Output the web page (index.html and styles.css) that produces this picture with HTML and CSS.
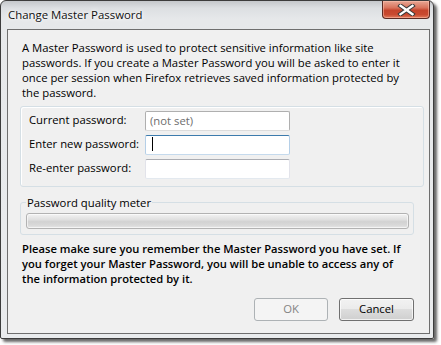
FILE: index.html
```html
<!DOCTYPE html>
<html>
<head>
<meta charset="utf-8">
<link rel="stylesheet" href="styles.css">
</head>
<body>
<div class="window">
  <div class="titlebar">
    <div class="title">Change Master Password</div>
    <div class="close">
      <svg width="21" height="12" viewBox="0 0 21 12">
        <path d="M4.5 1.8 L16.5 10.2 M16.5 1.8 L4.5 10.2" stroke="#3a3a3a" stroke-width="4.4" stroke-linecap="square" fill="none"/>
        <path d="M4.5 1.8 L16.5 10.2 M16.5 1.8 L4.5 10.2" stroke="#ffffff" stroke-width="2.4" stroke-linecap="square" fill="none"/>
      </svg>
    </div>
  </div>
  <div class="client">
    <p class="intro">A Master Password is used to protect sensitive information like site<br>passwords. If you create a Master Password you will be asked to enter it<br>once per session when Firefox retrieves saved information protected by<br>the password.</p>
    <div class="group fields">
      <label class="lbl">Current password:</label>
      <div class="input disabled">(not set)</div>
      <label class="lbl">Enter new password:</label>
      <div class="input focused"><span class="caret"></span></div>
      <label class="lbl">Re-enter password:</label>
      <div class="input"></div>
    </div>
    <fieldset class="meter">
      <legend>Password quality meter</legend>
      <div class="progress"></div>
    </fieldset>
    <p class="warning">Please make sure you remember the Master Password you have set. If<br>you forget your Master Password, you will be unable to access any of<br>the information protected by it.</p>
    <div class="buttons">
      <div class="btn btn-disabled">OK</div>
      <div class="btn">Cancel</div>
    </div>
  </div>
</div>
</body>
</html>
```
FILE: styles.css
```css
html, body {
  margin: 0;
  padding: 0;
  background: #ffffff;
  width: 441px;
  height: 345px;
  overflow: hidden;
}
body {
  font-family: "Open Sans", "Noto Sans", sans-serif;
  font-size: 11.3px;
  color: #000;
}
.window {
  box-sizing: border-box;
  width: 434px;
  height: 339px;
  border: 1px solid #3c3c3c;
  border-radius: 6px 6px 2px 2px;
  background: linear-gradient(180deg, #c4c7cb 0px, #dcdfe2 7px, #e6e8ea 18px, #e9ebed 100%);
  box-shadow: 3px 3px 3px rgba(0,0,0,0.6);
  padding: 0 3px 4px 6px;
  display: flex;
  flex-direction: column;
}
.titlebar {
  height: 28px;
  display: flex;
  align-items: flex-start;
}
.title {
  padding-top: 6px;
  padding-left: 1px;
  font-size: 11.4px;
  line-height: 16px;
  color: #101010;
  text-shadow: 0 0 6px #ffffff, 0 0 3px #ffffff;
}
.close {
  margin-left: auto;
  width: 46px;
  height: 17px;
  border: 1px solid #5b2b24;
  border-top: none;
  border-radius: 0 0 4px 4px;
  background: linear-gradient(180deg, #e8a795 0%, #d8735c 40%, #c5432b 55%, #c94a30 80%, #e27a5e 100%);
  box-shadow: inset 0 0 0 1px rgba(255,200,180,0.5);
  display: flex;
  align-items: center;
  justify-content: center;
}
.client {
  flex: 1;
  border: 1px solid #6e6e6e;
  background: #f0f0f0;
  padding: 10px 15px 0 14px;
}
.intro {
  margin: 0;
  line-height: 15px;
  white-space: nowrap;
}
.group {
  margin: 6px 0 0 -2px;
  width: 394px;
  border: 1px solid #d5dfe5;
  border-radius: 3px;
  box-shadow: inset 1px 1px 0 #ffffff;
}
.fields {
  display: grid;
  grid-template-columns: 116px 145px;
  row-gap: 4px;
  padding: 4px 0 7px 8px;
  align-items: center;
}
.lbl {
  line-height: 15px;
  position: relative;
  top: -2px;
}
.input {
  box-sizing: border-box;
  height: 20px;
  border: 1px solid #e2e3ea;
  border-top-color: #abadb3;
  border-bottom-color: #e3e9ef;
  border-radius: 2px;
  background: #fff;
  padding: 1px 4px;
  line-height: 16px;
}
.input.disabled {
  color: #6d6d6d;
  border-color: #afafaf;
  border-bottom-color: #dcdcdc;
}
.input.focused {
  border-color: #b5cfe7;
  border-top-color: #3d7bad;
  border-bottom-color: #c5daed;
}
.caret {
  display: block;
  width: 1px;
  height: 14px;
  margin-top: 0px;
  margin-left: 2px;
  background: #000;
}
.meter {
  margin: 8px 0 0 -2px;
  width: 394px;
  box-sizing: border-box;
  border: 1px solid #d5dfe5;
  border-radius: 3px;
  padding: 0 6px 5px 5px;
  min-inline-size: 0;
}
.meter legend {
  padding: 0 1px;
  line-height: 15px;
}
.progress {
  box-sizing: border-box;
  margin-top: 3px;
  height: 16px;
  width: 383px;
  border: 1px solid #b2b2b2;
  border-radius: 3px;
  background: linear-gradient(180deg, #f3f3f3 0%, #e0e0e0 40%, #d2d2d2 55%, #d9d9d9 80%, #e6e6e6 100%);
  box-shadow: inset 0 0 0 1px rgba(255,255,255,0.6);
}
.warning {
  margin: 6px 0 0 0;
  font-weight: 600;
  font-size: 11.2px;
  line-height: 15px;
  white-space: nowrap;
}
.buttons {
  margin-top: 12px;
  display: flex;
  justify-content: flex-end;
  gap: 11px;
}
.btn {
  box-sizing: border-box;
  width: 75px;
  height: 23px;
  border: 1px solid #707070;
  border-radius: 3px;
  background: linear-gradient(180deg, #f2f2f2 0%, #ebebeb 48%, #dddddd 50%, #cfcfcf 100%);
  box-shadow: inset 0 0 0 1px rgba(255,255,255,0.7);
  text-align: center;
  line-height: 20px;
}
.btn-disabled {
  width: 74px;
  border-color: #adb2b5;
  background: #f4f4f4;
  color: #838383;
  box-shadow: none;
}
```
